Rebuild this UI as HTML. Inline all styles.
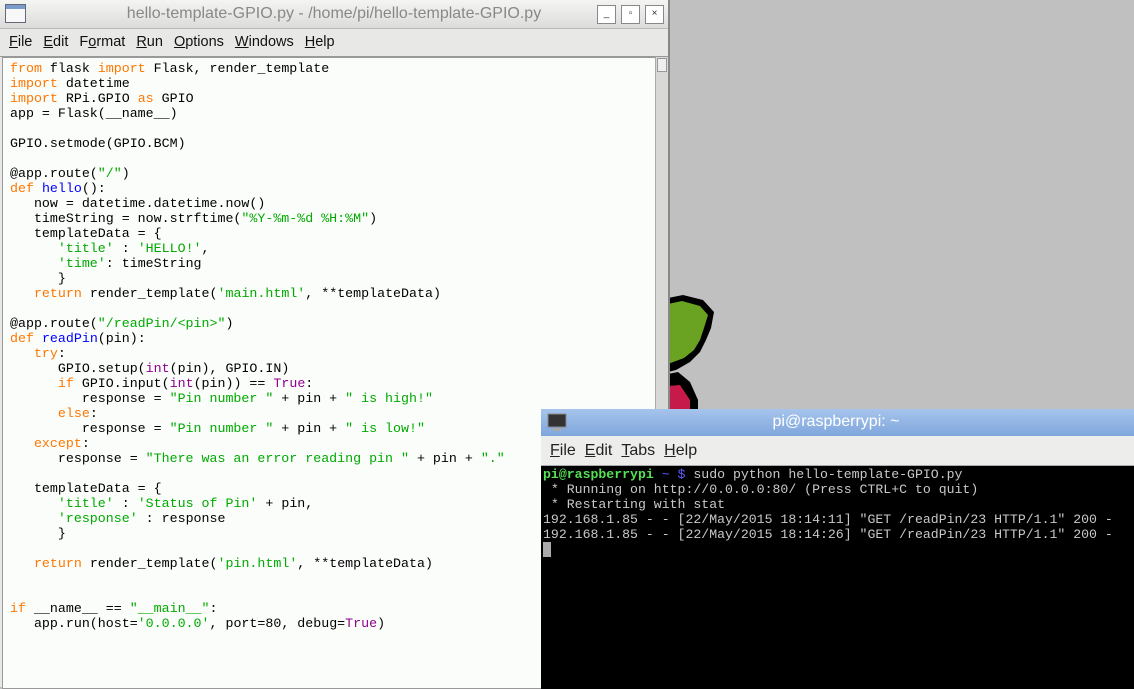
<!DOCTYPE html>
<html><head><meta charset="utf-8"><style>
body{margin:0;width:1134px;height:687px;background:#c0c0c0;position:relative;overflow:hidden;font-family:"Liberation Sans",sans-serif}
.idle{position:absolute;left:0;top:0;width:668px;height:687px;background:#e8e8e6;border-right:2px solid #888}
.tb{height:28px;background:linear-gradient(#f4f4f2,#dcdcda);border-bottom:1px solid #bbb;position:relative}
.tb .t{position:absolute;left:0;right:0;top:5px;text-align:center;color:#888;font-size:16px}
.btn{position:absolute;top:5px;width:17px;height:17px;border:1px solid #888;background:#fff;font-size:10px;text-align:center;line-height:16px;color:#333}
.menu{height:27px;font-size:14.5px;color:#111;padding-left:9px;line-height:27px;border-bottom:1px solid #999}
.menu span{margin-right:11px}
.code{position:absolute;left:2px;top:57px;width:652px;height:630px;background:#fbfdfb;border:1px solid #999}
pre{margin:0;position:absolute;left:7px;top:3px;font-family:"Liberation Mono",monospace;font-size:13.3px;line-height:15px;color:#000}
.k{color:#ff7700}.s{color:#00aa00}.d{color:#0000ff}.b{color:#900090}
.sb{position:absolute;left:655px;top:57px;width:12px;height:630px;background:#d8d8d6;border-left:1px solid #aaa}
.term{position:absolute;left:541px;top:409px;width:600px;height:280px;background:#000}
.ttb{height:27px;background:linear-gradient(#a6c4ec,#7fa6dc);position:relative}
.ttb .t{position:absolute;left:0;right:0;top:4px;text-align:center;color:#fff;font-size:16px;padding-right:10px}
.tm{height:29px;background:#ededeb;font-size:16px;line-height:29px;padding-left:9px;color:#222;border-bottom:1px solid #aaa}
.tm span{margin-right:9px}
.tpre{margin:0;position:absolute;left:2px;top:58px;font-family:"Liberation Mono",monospace;font-size:13.2px;line-height:15px;color:#c8c8c8}
.g{color:#55e055;font-weight:bold}.bl{color:#5c5cff}
</style></head><body>
<svg style="position:absolute;left:668px;top:290px" width="60" height="125"><path d="M0 8 L15 5 L35 10 L46 22 L43 38 L38 50 L32 62 L22 72 L8 80 L0 82 Z" fill="#000"/><path d="M0 14 L14 11 L32 16 L40 25 L36 38 L32 50 L26 60 L16 68 L0 74 Z" fill="#6aa221"/><path d="M0 84 L10 82 L22 92 L30 110 L30 125 L0 125Z" fill="#000"/><path d="M0 96 L12 95 L22 110 L22 125 L0 125Z" fill="#c51a4a"/></svg>
<div class="idle">
<div class="tb"><svg style="position:absolute;left:5px;top:4px" width="22" height="20"><rect x="0.5" y="0.5" width="20" height="18" fill="#f8f8f8" stroke="#667"/><rect x="1" y="1" width="19" height="4" fill="#7a9ccc"/></svg><div class="t">hello-template-GPIO.py - /home/pi/hello-template-GPIO.py</div>
<div class="btn" style="left:597px">_</div><div class="btn" style="left:621px">▫</div><div class="btn" style="left:645px">×</div></div>
<div class="menu"><span><u>F</u>ile</span><span><u>E</u>dit</span><span>F<u>o</u>rmat</span><span><u>R</u>un</span><span><u>O</u>ptions</span><span><u>W</u>indows</span><span><u>H</u>elp</span></div>
<div class="code"><pre><span class="k">from</span> flask <span class="k">import</span> Flask, render_template
<span class="k">import</span> datetime
<span class="k">import</span> RPi.GPIO <span class="k">as</span> GPIO
app = Flask(__name__)

GPIO.setmode(GPIO.BCM)

@app.route(<span class="s">"/"</span>)
<span class="k">def</span> <span class="d">hello</span>():
   now = datetime.datetime.now()
   timeString = now.strftime(<span class="s">"%Y-%m-%d %H:%M"</span>)
   templateData = {
      <span class="s">'title'</span> : <span class="s">'HELLO!'</span>,
      <span class="s">'time'</span>: timeString
      }
   <span class="k">return</span> render_template(<span class="s">'main.html'</span>, **templateData)

@app.route(<span class="s">"/readPin/&lt;pin&gt;"</span>)
<span class="k">def</span> <span class="d">readPin</span>(pin):
   <span class="k">try</span>:
      GPIO.setup(<span class="b">int</span>(pin), GPIO.IN)
      <span class="k">if</span> GPIO.input(<span class="b">int</span>(pin)) == <span class="b">True</span>:
         response = <span class="s">"Pin number "</span> + pin + <span class="s">" is high!"</span>
      <span class="k">else</span>:
         response = <span class="s">"Pin number "</span> + pin + <span class="s">" is low!"</span>
   <span class="k">except</span>:
      response = <span class="s">"There was an error reading pin "</span> + pin + <span class="s">"."</span>

   templateData = {
      <span class="s">'title'</span> : <span class="s">'Status of Pin'</span> + pin,
      <span class="s">'response'</span> : response
      }

   <span class="k">return</span> render_template(<span class="s">'pin.html'</span>, **templateData)


<span class="k">if</span> __name__ == <span class="s">"__main__"</span>:
   app.run(host=<span class="s">'0.0.0.0'</span>, port=80, debug=<span class="b">True</span>)
</pre></div>
<div class="sb"><div style="margin:1px;height:12px;background:#eee;border:1px solid #999"></div></div>
</div>
<div class="term">
<div class="ttb"><svg style="position:absolute;left:6px;top:4px" width="20" height="19"><rect x="1" y="1" width="18" height="13" fill="#333" stroke="#888"/><rect x="6" y="15" width="8" height="3" fill="#aaa"/></svg><div class="t">pi@raspberrypi: ~</div></div>
<div class="tm"><span><u>F</u>ile</span><span><u>E</u>dit</span><span><u>T</u>abs</span><span><u>H</u>elp</span></div>
<pre class="tpre"><span class="g">pi@raspberrypi</span> <span class="bl">~ $</span> sudo python hello-template-GPIO.py
 * Running on http://0.0.0.0:80/ (Press CTRL+C to quit)
 * Restarting with stat
192.168.1.85 - - [22/May/2015 18:14:11] "GET /readPin/23 HTTP/1.1" 200 -
192.168.1.85 - - [22/May/2015 18:14:26] "GET /readPin/23 HTTP/1.1" 200 -
<span style="background:#aaa">&nbsp;</span></pre>
</div>
</body></html>
